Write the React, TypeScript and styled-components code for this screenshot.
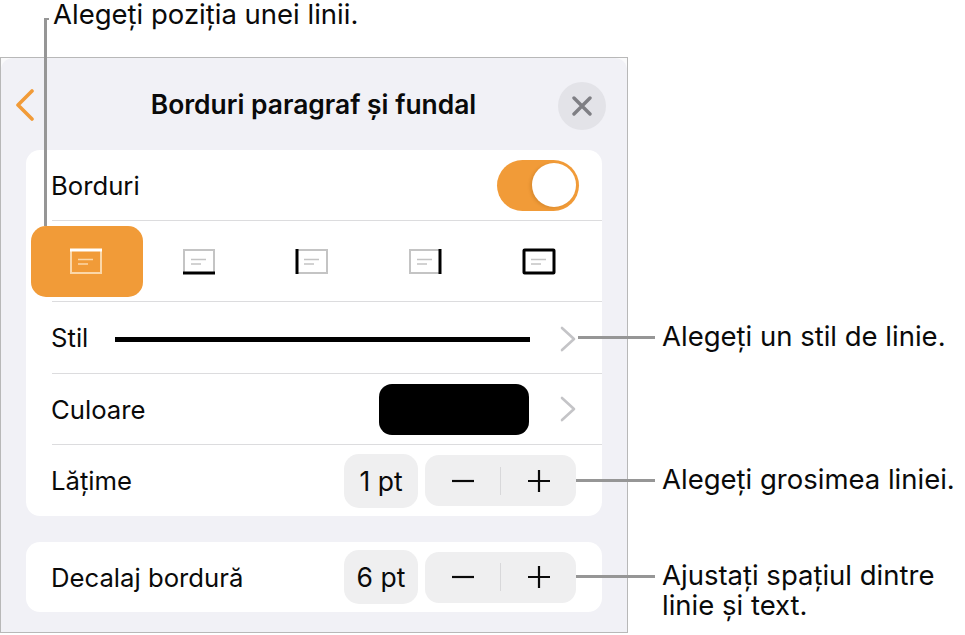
import React from "react";
import styled, { createGlobalStyle } from "styled-components";

const Global = createGlobalStyle`
  html, body { margin: 0; padding: 0; background: #fff; }
  body { font-family: Inter, "Liberation Sans", sans-serif; color: #0a0a0a; }
`;

const Page = styled.div`
  position: relative;
  width: 965px;
  height: 635px;
  overflow: hidden;
  display: grid;
  grid-template-columns: 628px 1fr;
  grid-template-rows: 57px 576px;
`;

const TopCaption = styled.div`
  grid-column: 1 / 3;
  padding-left: 53px;
  font-size: 27.5px;
  line-height: 28px;
`;

const TopLeader = styled.div`
  position: absolute;
  left: 44px;
  top: 18px;
  width: 3px;
  height: 208px;
  background: #969696;
  z-index: 2;
  &::before {
    content: "";
    position: absolute;
    left: 0;
    top: 0;
    width: 5px;
    height: 2px;
    background: #969696;
  }
`;

const Frame = styled.div`
  box-sizing: border-box;
  height: 576px;
  background: #fafafb;
  border: 1px solid #b8b8b8;
`;

const Panel = styled.div`
  box-sizing: border-box;
  height: 100%;
  background: #f1f1f6;
  border-radius: 12px 12px 0 0;
  padding: 0 25px;
  display: flex;
  flex-direction: column;
`;

const Header = styled.div`
  position: relative;
  height: 92px;
  flex: none;
  display: flex;
  align-items: center;
  justify-content: center;
  padding-right: 1px;
  box-sizing: border-box;
  font-size: 26.4px;
  font-weight: 600;
`;

const BackIcon = styled.svg`
  position: absolute;
  left: -11px;
  top: 31px;
  width: 20px;
  height: 32px;
  fill: none;
  stroke: #f19b38;
  stroke-width: 3.6;
  stroke-linecap: round;
  stroke-linejoin: round;
`;

const CloseButton = styled.div`
  position: absolute;
  right: -4px;
  top: 24px;
  width: 48px;
  height: 48px;
  border-radius: 50%;
  background: #e3e3e8;
  display: flex;
  align-items: center;
  justify-content: center;
`;

const CloseIcon = styled.svg`
  width: 20px;
  height: 20px;
  fill: none;
  stroke: #7f7f84;
  stroke-width: 3.4;
  stroke-linecap: round;
`;

const Card = styled.div<{ $mt?: number }>`
  background: #fff;
  border-radius: 14px;
  margin-top: ${(p) => p.$mt ?? 0}px;
  display: flex;
  flex-direction: column;
`;

const Row = styled.div<{ $h: number; $last?: boolean }>`
  box-sizing: border-box;
  height: ${(p) => p.$h}px;
  margin-left: 26px;
  padding-right: 23px;
  display: flex;
  align-items: center;
  font-size: 25.7px;
  border-bottom: ${(p) => (p.$last ? "none" : "1px solid #dcdcde")};
`;

const Label = styled.span`
  flex: none;
  margin-left: -1px;
`;

const Spacer = styled.div`
  flex: 1;
`;

const Toggle = styled.div`
  position: relative;
  width: 82px;
  height: 51px;
  border-radius: 26px;
  background: #f19b38;
  &::after {
    content: "";
    position: absolute;
    left: 35px;
    top: 3px;
    width: 44px;
    height: 44px;
    border-radius: 50%;
    background: #fff;
    box-shadow: -2px 1px 3px rgba(120, 70, 10, 0.18);
  }
`;

const IconRow = styled.div`
  box-sizing: border-box;
  height: 81px;
  margin-left: 26px;
  border-bottom: 1px solid #dcdcde;
`;

const IconGrid = styled.div`
  margin-left: -21px;
  padding-top: 5px;
  width: 566px;
  display: grid;
  grid-template-columns: 112px 113px 113px 113px 115px;
`;

const IconCell = styled.div<{ $active?: boolean }>`
  height: 71px;
  padding-right: 2px;
  box-sizing: border-box;
  border-radius: 15px;
  background: ${(p) => (p.$active ? "#f19b38" : "transparent")};
  display: flex;
  align-items: center;
  justify-content: center;
`;

const BorderGlyph = styled.svg`
  width: 34px;
  height: 27px;
  overflow: visible;
`;

const PositionIcon = ({ side, active }: { side: string; active?: boolean }) => {
  const base = active ? "#fbd7a8" : "#c4c4c4";
  const strong = active ? "#ffffff" : "#000000";
  return (
    <BorderGlyph viewBox="0 0 34 27">
      <rect x="2" y="2" width="30" height="23" fill="none" stroke={base} strokeWidth="2" />
      <path d="M9 11.5h15M9 16h10" stroke={base} strokeWidth="1.4" fill="none" />
      {side === "top" && <path d="M1 2h32" stroke={strong} strokeWidth="3" />}
      {side === "bottom" && <path d="M1 25h32" stroke={strong} strokeWidth="3" />}
      {side === "left" && <path d="M2 1v25" stroke={strong} strokeWidth="3" />}
      {side === "right" && <path d="M32 1v25" stroke={strong} strokeWidth="3" />}
      {side === "all" && <rect x="2" y="2" width="30" height="23" fill="none" stroke={strong} strokeWidth="3" rx="0.6" />}
    </BorderGlyph>
  );
};

const StyleLine = styled.div`
  flex: 1;
  height: 5px;
  background: #000;
  margin: 3px 30px 0 27px;
`;

const Chevron = styled.svg<{ $drop?: number }>`
  flex: none;
  width: 16px;
  height: 26px;
  fill: none;
  stroke: #c4c4c7;
  stroke-width: 2.6;
  stroke-linecap: round;
  stroke-linejoin: round;
  margin: ${(p) => p.$drop ?? 0}px 3px 0 0;
`;

const Swatch = styled.div`
  width: 150px;
  height: 51px;
  border-radius: 13px;
  background: #000;
  margin-right: 31px;
`;

const ValueBox = styled.div`
  width: 74px;
  height: 54px;
  border-radius: 15px;
  background: #efeff0;
  display: flex;
  align-items: center;
  justify-content: center;
  font-size: 26.5px;
`;

const Stepper = styled.div`
  margin-left: 7px;
  margin-right: 3px;
  width: 151px;
  height: 51px;
  border-radius: 14px;
  background: #efeff0;
  display: grid;
  grid-template-columns: 75px 1px 75px;
  align-items: center;
`;

const StepDivider = styled.div`
  height: 28px;
  background: #d8d8da;
`;

const StepGlyph = styled.svg`
  justify-self: center;
  width: 24px;
  height: 24px;
  fill: none;
  stroke: #0a0a0a;
  stroke-width: 2.2;
`;

const StepperControl = () => (
  <Stepper>
    <StepGlyph viewBox="0 0 24 24"><path d="M1 12h22" /></StepGlyph>
    <StepDivider />
    <StepGlyph viewBox="0 0 24 24"><path d="M1 12h22M12 1v22" /></StepGlyph>
  </Stepper>
);

const Side = styled.div`
  display: flex;
  flex-direction: column;
  padding-left: 34px;
`;

const Callout = styled.div<{ $top: number; $lead: number }>`
  position: relative;
  margin-top: ${(p) => p.$top}px;
  font-size: 27.5px;
  line-height: 30px;
  white-space: nowrap;
  &::before {
    content: "";
    position: absolute;
    top: 15px;
    left: -${(p) => p.$lead + 7}px;
    width: ${(p) => p.$lead}px;
    height: 3px;
    background: #969696;
    z-index: 2;
  }
`;

export default function App() {
  return (
    <Page>
      <Global />
      <TopCaption>Alegeți poziția unei linii.</TopCaption>
      <TopLeader />
      <Frame>
        <Panel>
          <Header>
            <BackIcon viewBox="0 0 20 32"><path d="M17 2 L3 16 L17 30" /></BackIcon>
            Borduri paragraf și fundal
            <CloseButton>
              <CloseIcon viewBox="0 0 20 20"><path d="M2 2 L18 18 M18 2 L2 18" /></CloseIcon>
            </CloseButton>
          </Header>
          <Card>
            <Row $h={71}>
              <Label>Borduri</Label>
              <Spacer />
              <Toggle />
            </Row>
            <IconRow>
              <IconGrid>
                <IconCell $active><PositionIcon side="top" active /></IconCell>
                <IconCell><PositionIcon side="bottom" /></IconCell>
                <IconCell><PositionIcon side="left" /></IconCell>
                <IconCell><PositionIcon side="right" /></IconCell>
                <IconCell><PositionIcon side="all" /></IconCell>
              </IconGrid>
            </IconRow>
            <Row $h={72}>
              <Label>Stil</Label>
              <StyleLine />
              <Chevron $drop={3} viewBox="0 0 16 26"><path d="M2 2 L14 13 L2 24" /></Chevron>
            </Row>
            <Row $h={71}>
              <Label>Culoare</Label>
              <Spacer />
              <Swatch />
              <Chevron viewBox="0 0 16 26"><path d="M2 2 L14 13 L2 24" /></Chevron>
            </Row>
            <Row $h={71} $last>
              <Label>Lățime</Label>
              <Spacer />
              <ValueBox>1 pt</ValueBox>
              <StepperControl />
            </Row>
          </Card>
          <Card $mt={26}>
            <Row $h={70} $last>
              <Label>Decalaj bordură</Label>
              <Spacer />
              <ValueBox>6 pt</ValueBox>
              <StepperControl />
            </Row>
          </Card>
        </Panel>
      </Frame>
      <Side>
        <Callout $top={264} $lead={77}>Alegeți un stil de linie.</Callout>
        <Callout $top={113} $lead={79}>Alegeți grosimea liniei.</Callout>
        <Callout $top={66} $lead={79}>Ajustați spațiul dintre<br />linie și text.</Callout>
      </Side>
    </Page>
  );
}
